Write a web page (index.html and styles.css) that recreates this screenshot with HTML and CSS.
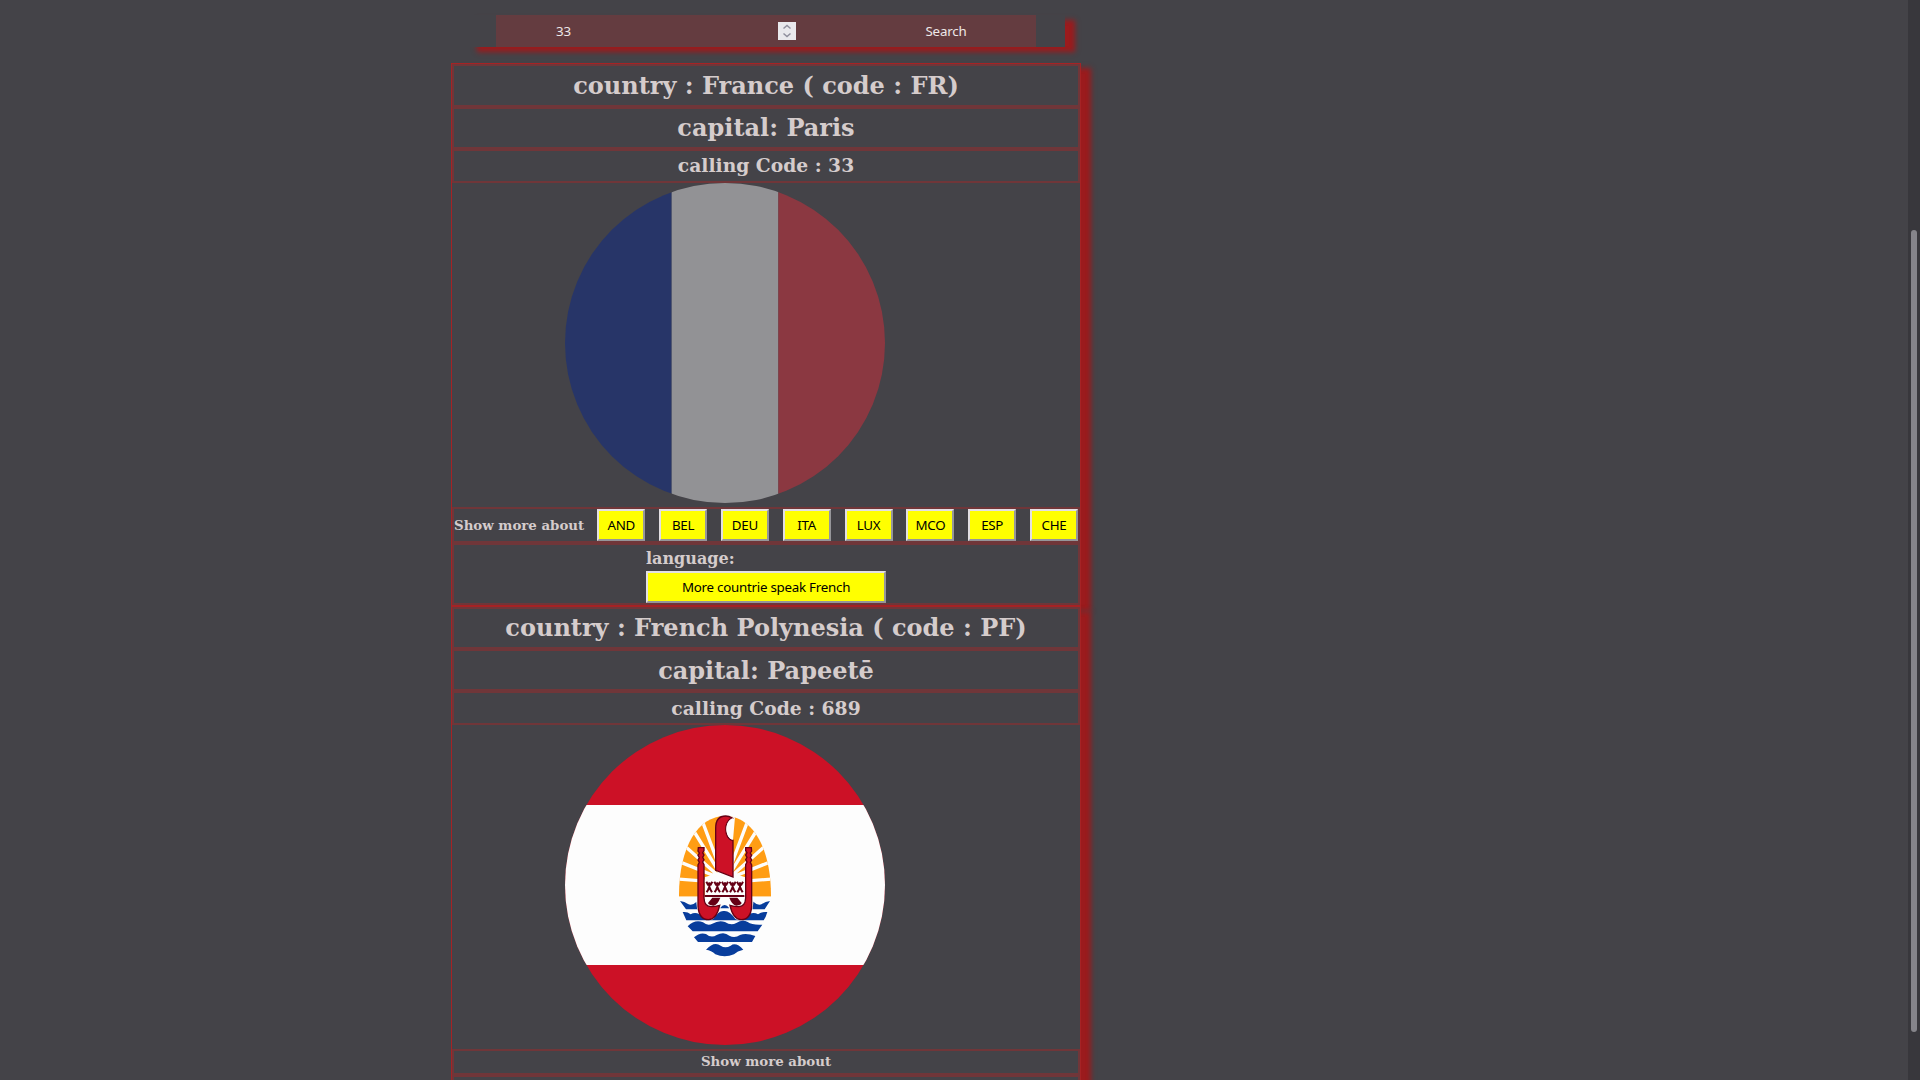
FILE: index.html
```
<!DOCTYPE html>
<html lang="en">
<head>
<meta charset="utf-8">
<title>Countries</title>
<link rel="stylesheet" href="styles.css">
</head>
<body>
<main class="page">
  <form class="search">
    <div class="field">
      <span class="value">33</span>
      <span class="spinner"><svg viewBox="0 0 18 18"><path d="M5.500 6.500L9 3.500l3.500 3M5.500 11.500l3.500 3 3.500-3"/></svg></span>
    </div>
    <div class="submit">Search</div>
  </form>

  <article class="card">
    <h1 class="row title lead">country : France ( code : FR)</h1>
    <h1 class="row title">capital: Paris</h1>
    <h2 class="row calling first">calling Code : 33</h2>
    <svg class="flag faded" viewBox="0 0 320 320">
      <path fill="#002395" d="M0 0h106.670v320H0z"/><path fill="#fff" d="M106.670 0h106.670v320H106.670z"/><path fill="#ed2939" d="M213.330 0H320v320H213.330z"/>
    </svg>
    <div class="row borders">
      <span class="more">Show more about</span>
      <button>AND</button><button>BEL</button><button>DEU</button><button>ITA</button><button>LUX</button><button>MCO</button><button>ESP</button><button>CHE</button>
    </div>
    <div class="row language">
      <div class="language-box">
        <h3>language:</h3>
        <button class="wide">More countrie speak French</button>
      </div>
    </div>
  </article>

  <article class="card">
    <h1 class="row title">country : French Polynesia ( code : PF)</h1>
    <h1 class="row title low">capital: Papeetē</h1>
    <h2 class="row calling">calling Code : 689</h2>
    <svg class="flag" viewBox="0 0 320 320">
      <path fill="#cc1126" d="M0 0h320v320H0z"/><path fill="#fdfdfd" d="M0 80h320v160H0z"/>
      <!-- emblem, in thirds of a pixel -->
      <g transform="translate(95 75) scale(.33333)">
        <clipPath id="sun"><path d="M57 290C56 140 115 48 195 48S334 140 333 290z"/></clipPath>
        <g clip-path="url(#sun)">
          <path fill="#ff9d14" d="M50 40h290v250H50z"/>
          <path stroke="#fdfdfd" stroke-width="10" d="M195 245L122 50M195 245L90 75M195 245L60 125M195 240L40 178M195 248L40 236M195 245L268 50M195 245L300 75M195 245L330 125M195 240L350 178M195 248L350 236"/>
          <path fill="#fdfdfd" d="M134 232l30-10h62l30 10v58H134zM196 40h30l-7 80h-20z"/>
        </g>
        <g fill="#083d9c">
          <path d="M60 303q14 2 24 9 12 7 28-8l10 24H78zM330 303q-14 2-24 9-12 7-28-8l-10 24h46zM180 325q14-20 28 0z"/>
          <path d="M68 336q14-2 24 7 18-12 40 10 14 12 28 4 16-26 32-24 16-2 34 24 14 8 28-4 22-22 40-10 12-9 28-7-4 15-11 25H79z"/>
          <path d="M83 379q22-22 46-12 14 12 28 4 20-12 38-5 18 12 34 3 18-12 34-3 14 10 44 8l-14 20H98z"/>
          <path d="M102 412q18-16 36-10 16 14 32 3 22-12 38 2 16 9 32-2 18-8 46 3l-10 18H114z"/>
          <path d="M138 449q24-26 44-12 14 10 30 0 16-12 38 12-18 4-28 14-28 12-56 0-12-12-28-14z"/>
        </g>
        <path fill="#cc1126" stroke="#650015" stroke-width="4" d="M167 211V85c0-24 10-37 30-37 9 0 15 3 20 6-28 8-25 64 2 67v110z"/>
        <path fill="#fdfdfd" d="M219 55c-28 7-25 60-1 64z"/>
        <path fill="none" stroke="#650015" stroke-width="6" d="M134 288h119"/>
        <path id="man" fill="none" stroke="#650015" stroke-width="6" d="M139 245l5 9h8l5-9M148 247v15M140 277l4-7 4-9 4 9 4 7"/>
        <use href="#man" x="24"/><use href="#man" x="47"/><use href="#man" x="70"/><use href="#man" x="92"/>
        <g id="hull">
          <path fill="#fdfdfd" d="M108 300h10v40l-6-8zM130 296q8 28 50 26l2 8-12 14-36-10z"/>
          <path fill="#650015" d="M157 293h24q-8 22-21 24-14-2-16-8z"/>
          <path fill="#cc1126" stroke="#650015" stroke-width="4" d="M115 143h17v9l-4 6 4 7-4 7 4 7-4 7 4 8v100q1 26 22 26 12 0 25-4-9 42-33 43-29 0-32-40V195l4-8-4-7 4-7-4-7 4-7-4-6z"/>
        </g>
        <use href="#hull" transform="translate(389 0) scale(-1 1)"/>
      </g>
    </svg>
    <div class="row neighbours"><span class="more">Show more about</span></div>
    <div class="row language"></div>
  </article>
</main>
<div class="scrollbar"><div class="thumb"></div></div>
</body>
</html>
```
FILE: styles.css
```
* { box-sizing: border-box; }
html, body { height: 100%; }
body {
  margin: 0;
  overflow: hidden;
  display: flex;
  justify-content: space-between;
  background: #444348;
  color: #d5cccc;
  font-family: "DejaVu Serif", serif;
}
.page { width: 630px; margin-left: 451px; padding-top: 15px; }
.search {
  display: flex;
  width: 598px;
  height: 32px;
  margin: 0 0 16px 16px;
  padding: 0 29px;
  background: #444348;
  box-shadow: 10px 5px 5px #9b1b1d;
  color: #eee8e8;
  font: 13.333px/32px "Noto Sans", sans-serif;
}
.field, .submit { background: #643c40; }
.field {
  display: flex;
  align-items: center;
  justify-content: space-between;
  width: 360px;
  padding: 0 60px;
}
.value { letter-spacing: -.2px; }
.spinner { width: 18px; height: 18px; background: #e9e9ed; }
.spinner svg { display: block; fill: none; stroke: #8f8f9d; stroke-width: 1.500; }
.submit { flex: 1; text-align: center; letter-spacing: -.2px; }
.card {
  border: 1px solid #a52325;
  background: #444348;
  box-shadow: 10px 5px 5px #9b1b1d;
}
.row { margin: 0; border: 2px solid #703639; text-align: center; font-weight: bold; }
.title { height: 42px; font-size: 24px; line-height: 38px; }
.lead { height: 43px; line-height: 40px; }
.low { line-height: 40px; }
.calling { height: 34px; font-size: 18.720px; line-height: 30px; }
.first { line-height: 28px; }
.flag { display: block; width: 320px; height: 320px; margin: 0 0 4px 113px; border-radius: 50%; }
.faded { opacity: .42; }
.more { font-size: 13.333px; }
.borders { display: flex; justify-content: space-between; align-items: center; height: 36px; }
.borders .more { margin-right: -.7px; }
button {
  width: 48px;
  height: 32px;
  padding: 0;
  background: #ff0;
  border: 2px solid;
  border-color: #e3dfe3 #96969a #96969a #e3dfe3;
  color: #000;
  font: 13.333px "Noto Sans", sans-serif;
  letter-spacing: -.25px;
}
.language { height: 62px; display: flex; justify-content: center; }
.language-box { width: 240px; text-align: left; }
.language h3 { margin: 0; height: 26px; font-size: 16px; line-height: 28px; }
.wide { display: block; width: 240px; }
.neighbours { height: 26px; line-height: 20px; }
.scrollbar { width: 12px; padding: 230px 3px 0; background: #38373c; }
.thumb { height: 802px; border-radius: 3px; background: #85848a; }
```
